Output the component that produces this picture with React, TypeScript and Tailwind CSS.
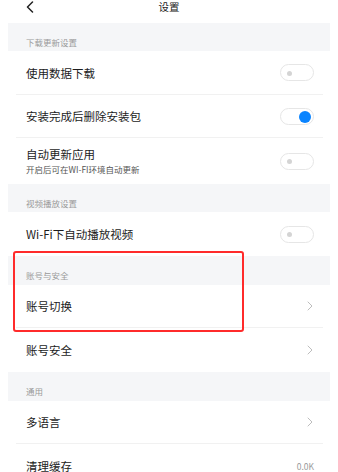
import React from 'react';

const font = { fontFamily: '"Noto Sans CJK SC", "Noto Sans", sans-serif' };

const Toggle = ({ on }: { on?: boolean }) => (
  <div className="relative w-[34px] h-[17px] rounded-full border border-[#e6e6e6] bg-white">
    {on ? (
      <div className="absolute right-[2px] top-[2px] w-[12px] h-[12px] rounded-full bg-[#0a84ff]" />
    ) : (
      <div className="absolute left-[6px] top-[5.5px] w-[5px] h-[5px] rounded-full bg-[#d4d4d4]" />
    )}
  </div>
);

const Chevron = () => (
  <svg width="6" height="10" viewBox="0 0 6 10" fill="none" className="mr-[1px]">
    <path d="M1 1l4 4-4 4" stroke="#bdbdbd" strokeWidth="1" strokeLinecap="round" strokeLinejoin="round" />
  </svg>
);

const SectionTitle = ({ title, h = 'h-[28px]' }: { title: string; h?: string }) => (
  <div className={`${h} bg-[#f5f6f8] px-[18px] pt-[13px] text-[8.5px] leading-[12px] text-[#9a9a9a]`}>{title}</div>
);

const Row = ({
  label,
  sub,
  right,
  h = 'h-[44px]',
  divider = true,
}: {
  label: string;
  sub?: string;
  right?: React.ReactNode;
  h?: string;
  divider?: boolean;
}) => (
  <div className={`${h} ml-4 mr-[15px] flex items-center justify-between pl-[10px] pr-[9px] ${divider ? 'border-b border-[#f1f1f1]' : ''}`}>
    <div className="flex flex-col">
      <span className="text-[11.5px] leading-[16px] text-[#1c1c1c]">{label}</span>
      {sub && <span className="text-[8.5px] leading-[13px] mt-[1px] text-[#555]">{sub}</span>}
    </div>
    {right}
  </div>
);

export default function App() {
  return (
    <div className="relative w-[338px] h-[472px] overflow-hidden bg-white" style={font}>
      {/* Header */}
      <div className="relative h-[23px]">
        <div className="flex h-[14px] items-center justify-center text-[10.5px] text-[#222]">设置</div>
        <svg width="8" height="12" viewBox="0 0 8 12" className="absolute left-[26px] top-[1px]" fill="none">
          <path d="M6.5 1L1.5 6l5 5" stroke="#222" strokeWidth="1.5" strokeLinecap="round" strokeLinejoin="round" />
        </svg>
      </div>

      <div className="px-2">
        <SectionTitle title="下载更新设置" />
      </div>
      <Row label="使用数据下载" right={<Toggle />} />
      <Row label="安装完成后删除安装包" right={<Toggle on />} h="h-[43px]" />
      <Row label="自动更新应用" sub="开启后可在WI-FI环境自动更新" right={<Toggle />} h="h-[46px]" divider={false} />

      <div className="px-2">
        <SectionTitle title="视频播放设置" />
      </div>
      <Row label="Wi-Fi下自动播放视频" right={<Toggle />} divider={false} />

      <div className="px-2">
        <SectionTitle title="账号与安全" h="h-[29px]" />
      </div>
      <Row label="账号切换" right={<Chevron />} h="h-[43px]" />
      <Row label="账号安全" right={<Chevron />} divider={false} />

      <div className="px-2">
        <SectionTitle title="通用" h="h-[29px]" />
      </div>
      <Row label="多语言" right={<Chevron />} h="h-[43px]" />
      <Row label="清理缓存" right={<span className="text-[8.5px] text-[#9a9a9a]">0.0K</span>} divider={false} />

      {/* Red highlight box */}
      <div className="absolute left-[13px] top-[251px] w-[231px] h-[81px] rounded-[3px] border-2 border-[#ff2b2b]" />
    </div>
  );
}
